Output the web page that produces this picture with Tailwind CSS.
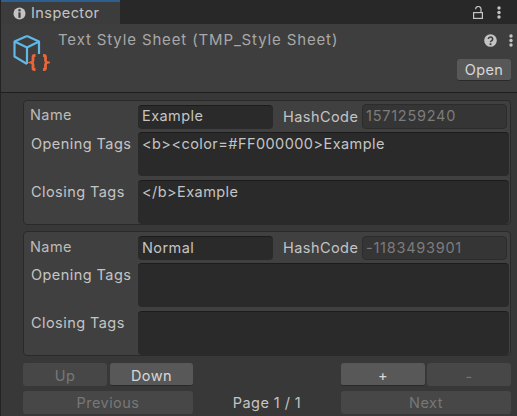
<!doctype html>
<html><head><meta charset="utf-8">
<script src="https://cdn.jsdelivr.net/npm/@tailwindcss/browser@4"></script>
</head>
<body class="m-0 bg-[#383838]">
<div class="w-[517px] h-[416px] overflow-hidden flex flex-col font-['Inter',sans-serif] text-[14.5px] leading-[18px] tracking-[0.44px] text-[#c4c4c4] border-l border-[#232323]">
  <!-- tab bar -->
  <div class="h-[24px] shrink-0 flex bg-[#282828]">
    <div class="w-[119px] flex items-center gap-[5px] pl-[12px] bg-[#3c3c3c] border-t-2 border-[#2d5f91] text-[#c4c4c4]">
      <svg width="13" height="13" viewBox="0 0 13 13"><circle cx="6.5" cy="6.5" r="6" fill="#c4c4c4"/><rect x="5.4" y="2.2" width="2.2" height="2.2" fill="#3c3c3c"/><rect x="5.4" y="5.4" width="2.2" height="5.4" fill="#3c3c3c"/></svg>
      <span>Inspector</span>
    </div>
    <div class="flex-1 flex items-center justify-end pr-[16px] gap-[14px]">
      <svg width="10" height="13" viewBox="0 0 10 13" fill="none" stroke="#c4c4c4" stroke-width="1.2"><rect x="0.6" y="6.6" width="8.800" height="5.800"/><path d="M8 6.500V3.200a2.700 2.700 0 0 0-5.400 0"/></svg>
      <svg width="4" height="13" viewBox="0 0 4 13" fill="#c4c4c4"><circle cx="2" cy="2" r="1.7"/><circle cx="2" cy="6.5" r="1.7"/><circle cx="2" cy="11" r="1.7"/></svg>
    </div>
  </div>
  <!-- header -->
  <div class="h-[69px] shrink-0 bg-[#3e3e3e] border-b border-[#1e1e1e] flex relative">
    <svg class="ml-[11px] mt-[10px]" width="38" height="38" viewBox="0 0 38 38" fill="none">
      <path d="M15 2 27 7.500V20M15 2 2.500 7.500V22.500L15 30M2.500 7.500 15 13.500 27 7.500M15 13.500V30" stroke="#5fb8e6" stroke-width="2.200" stroke-linejoin="round"/>
      <path d="M23.500 21.500H22.500Q21 21.500 21 23V26.500Q21 28 19.500 28.500Q21 29 21 30.500V34Q21 35.500 22.500 35.500H23.500M31 21.500H32Q33.500 21.500 33.500 23V26.500Q33.500 28 35.300 28.500Q33.500 29 33.500 30.500V34Q33.500 35.500 32 35.500H31" stroke="#e8663a" stroke-width="2.800"/>
    </svg>
    <div class="ml-[8px] mt-[7px] text-[15px] text-[#a8a8a8] tracking-[0.86px] whitespace-nowrap">Text Style Sheet (TMP_Style Sheet)</div>
    <div class="ml-auto pr-[6px] pt-[9px] flex flex-col items-end">
      <div class="flex items-center gap-[12px] pr-0 -mr-[2px] h-[15px]">
        <svg width="13" height="13" viewBox="0 0 13 13"><circle cx="6.500" cy="6.500" r="6.300" fill="#c4c4c4"/><path d="M4.300 5a2.200 2 0 1 1 3.400 1.700c-.8.5-1.200.9-1.200 1.600" fill="none" stroke="#3e3e3e" stroke-width="1.500"/><rect x="5.600" y="9.300" width="1.800" height="1.800" fill="#3e3e3e"/></svg>
        <svg width="4" height="13" viewBox="0 0 4 13" fill="#c4c4c4"><circle cx="2" cy="2" r="1.700"/><circle cx="2" cy="6.500" r="1.700"/><circle cx="2" cy="11" r="1.700"/></svg>
      </div>
      <button class="mt-[11px] w-[54px] h-[22px] rounded-[3px] bg-[#585858] border-b border-[#2a2a2a] text-[#d8d8d8] text-center">Open</button>
    </div>
  </div>
  <!-- body -->
  <div class="flex-1 flex flex-col px-[22px] pr-[6px] pt-[7px] gap-[6px]">
    <div class="h-[125px] rounded-[4px] bg-[#404040] border border-[#2a2a2a] flex flex-col pl-[6px] pr-[1px] pt-[2px]">
      <div class="h-[27px] flex items-center">
        <span class="w-[108px] text-[#bcbcbc] pb-[3px]">Name</span>
        <div class="w-[135px] h-[24px] rounded-[4px] bg-[#2a2a2a] border-t border-[#1c1c1c] flex items-center px-[4px] pb-[2px]">Example</div>
        <span class="ml-[10px] w-[79px]">HashCode</span>
        <div class="w-[145px] h-[25px] rounded-[4px] bg-[#353535] border border-[#2c2c2c] flex items-center px-[3px] pb-[2px] text-[#7c7c7c] tracking-[0.75px]">1571259240</div>
      </div>
      <div class="mt-[2px] h-[44px] flex">
        <span class="w-[108px] pt-[3px] pl-[1px]">Opening Tags</span>
        <div class="flex-1 rounded-[4px] bg-[#2a2a2a] border-t border-[#1c1c1c] px-[4px] pt-[2px]">&lt;b&gt;&lt;color=#FF000000&gt;Example</div>
      </div>
      <div class="mt-[4px] h-[44px] flex">
        <span class="w-[108px] pt-[3px] pl-[1px]">Closing Tags</span>
        <div class="flex-1 rounded-[4px] bg-[#2a2a2a] border-t border-[#1c1c1c] px-[4px] pt-[2px]">&lt;/b&gt;Example</div>
      </div>
    </div>
    <div class="h-[125px] rounded-[4px] bg-[#404040] border border-[#2a2a2a] flex flex-col pl-[6px] pr-[1px] pt-[2px]">
      <div class="h-[27px] flex items-center">
        <span class="w-[108px] text-[#bcbcbc] pb-[1px]">Name</span>
        <div class="w-[135px] h-[24px] rounded-[4px] bg-[#2a2a2a] border-t border-[#1c1c1c] flex items-center px-[4px] pb-[1px]">Normal</div>
        <span class="ml-[10px] w-[79px]">HashCode</span>
        <div class="w-[145px] h-[24px] rounded-[4px] bg-[#353535] border border-[#2c2c2c] flex items-center px-[3px] text-[#7c7c7c] tracking-[0.75px]">-1183493901</div>
      </div>
      <div class="mt-[2px] h-[44px] flex">
        <span class="w-[108px] pt-[3px] pl-[1px]">Opening Tags</span>
        <div class="flex-1 rounded-[4px] bg-[#2a2a2a] border-t border-[#1c1c1c]"></div>
      </div>
      <div class="mt-[4px] h-[44px] flex">
        <span class="w-[108px] pt-[3px] pl-[1px]">Closing Tags</span>
        <div class="flex-1 rounded-[4px] bg-[#2a2a2a] border-t border-[#1c1c1c]"></div>
      </div>
    </div>
    <div class="mt-[1px] grid grid-cols-[170px_148px_170px] gap-y-[5px]">
      <div class="flex gap-[3px] h-[23px]">
        <div class="w-[84px] rounded-[3px] bg-[#474747] text-[#777777] flex items-center justify-center pt-[2px]">Up</div>
        <div class="w-[83px] rounded-[3px] bg-[#585858] border-b border-[#2a2a2a] text-[#d8d8d8] flex items-center justify-center pt-[3px]">Down</div>
      </div>
      <div></div>
      <div class="flex gap-[2px] h-[23px]">
        <div class="w-[84px] rounded-[3px] bg-[#585858] border-b border-[#2a2a2a] text-[#d8d8d8] flex items-center justify-center pt-[4px]">+</div>
        <div class="w-[84px] rounded-[3px] bg-[#474747] text-[#777777] flex items-center justify-center pt-[4px]">-</div>
      </div>
      <div class="h-[23px] rounded-[3px] bg-[#474747] text-[#777777] flex items-center justify-center">Previous</div>
      <div class="flex items-center justify-center text-[#c4c4c4]">Page 1 / 1</div>
      <div class="h-[23px] rounded-[3px] bg-[#474747] text-[#777777] flex items-center justify-center">Next</div>
    </div>
  </div>
</div>
</body></html>
